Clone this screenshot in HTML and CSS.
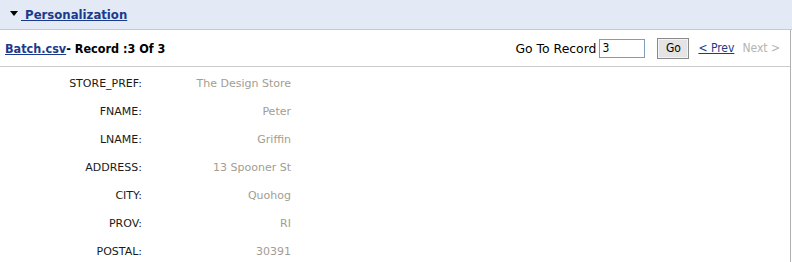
FILE: index.html
```html
<!DOCTYPE html>
<html lang="en">

<head>
    <meta charset="UTF-8">
    <title>Personalization</title>
    <link rel="stylesheet" href="styles.css">
</head>

<body>
    <div class="section-head">
        <span class="arrow"></span>
        <a href="#" class="section-link">&nbsp;Personalization</a>
    </div>
    <div class="panel">
        <div class="toolbar">
            <div class="record-info">
                <a href="#" class="file-link">Batch.csv</a>- Record :3 Of 3
            </div>
            <div class="pager">
                <span class="goto-label">Go To Record</span>
                <input type="text" class="goto-input" value="3">
                <button class="go-btn">Go</button>
                <a href="#" class="prev">&lt; Prev</a>
                <span class="next">Next &gt;</span>
            </div>
        </div>
        <div class="fields">
            <div class="field"><span class="label">STORE_PREF:</span><span class="value">The Design Store</span></div>
            <div class="field"><span class="label">FNAME:</span><span class="value">Peter</span></div>
            <div class="field"><span class="label">LNAME:</span><span class="value">Griffin</span></div>
            <div class="field"><span class="label">ADDRESS:</span><span class="value">13 Spooner St</span></div>
            <div class="field"><span class="label">CITY:</span><span class="value">Quohog</span></div>
            <div class="field"><span class="label">PROV:</span><span class="value">RI</span></div>
            <div class="field"><span class="label">POSTAL:</span><span class="value">30391</span></div>
        </div>
    </div>
</body>

</html>
```

FILE: styles.css
```css
body {
    margin: 0;
    font-family: "DejaVu Sans", Verdana, sans-serif;
    font-size: 11px;
    color: #000000;
    background-color: #ffffff;
}

.section-head {
    height: 29px;
    background-color: #e3eaf5;
    border-bottom: 1px solid #c3c9d3;
    display: flex;
    align-items: center;
    padding-left: 10px;
}

.arrow {
    width: 0;
    height: 0;
    border-left: 4px solid transparent;
    border-right: 4px solid transparent;
    border-top: 5px solid #000000;
    margin-top: -2px;
}

.section-link {
    font-family: "DejaVu Sans Condensed", "DejaVu Sans", sans-serif;
    font-weight: bold;
    font-size: 13px;
    color: #1c3a8c;
    margin-left: 3px;
}

.panel {
    width: 790px;
    border-right: 1px solid #b0b0b0;
}

.toolbar {
    height: 36px;
    border-bottom: 1px solid #cccccc;
    display: flex;
    align-items: center;
    justify-content: space-between;
    padding-left: 5px;
}

.record-info {
    font-family: "DejaVu Sans Condensed", "DejaVu Sans", sans-serif;
    font-weight: bold;
    font-size: 12.5px;
}

.file-link {
    color: #1c3a8c;
}

.pager {
    display: flex;
    align-items: center;
    font-size: 12px;
    font-family: "DejaVu Sans Condensed", "DejaVu Sans", sans-serif;
    padding-right: 10px;
}

.goto-label {
    font-family: "DejaVu Sans", sans-serif;
    font-size: 12.4px;
}

.goto-input {
    width: 40px;
    height: 15px;
    margin: 0 0 0 3px;
    padding: 1px 2px;
    border: 1px solid #7f9db9;
    font-family: "DejaVu Sans Condensed", "DejaVu Sans", sans-serif;
    font-size: 12px;
}

.go-btn {
    width: 32px;
    height: 21px;
    margin-left: 12px;
    padding: 0;
    background-color: #e4e4e4;
    border: 1px solid #8a8a8a;
    box-shadow: inset 0 0 0 1px #f4f4f4;
    font-family: "DejaVu Sans Condensed", "DejaVu Sans", sans-serif;
    font-size: 12px;
    color: #000000;
}

.prev {
    color: #1c3a8c;
    margin-left: 9px;
}

.next {
    color: #b4b4b4;
    margin-left: 8px;
}

.fields {
    padding-top: 2px;
}

.field {
    display: flex;
    height: 28px;
    align-items: center;
}

.label {
    width: 142px;
    text-align: right;
    color: #1a1a1a;
}

.value {
    width: 149px;
    text-align: right;
    color: #a39d91;
}
```
